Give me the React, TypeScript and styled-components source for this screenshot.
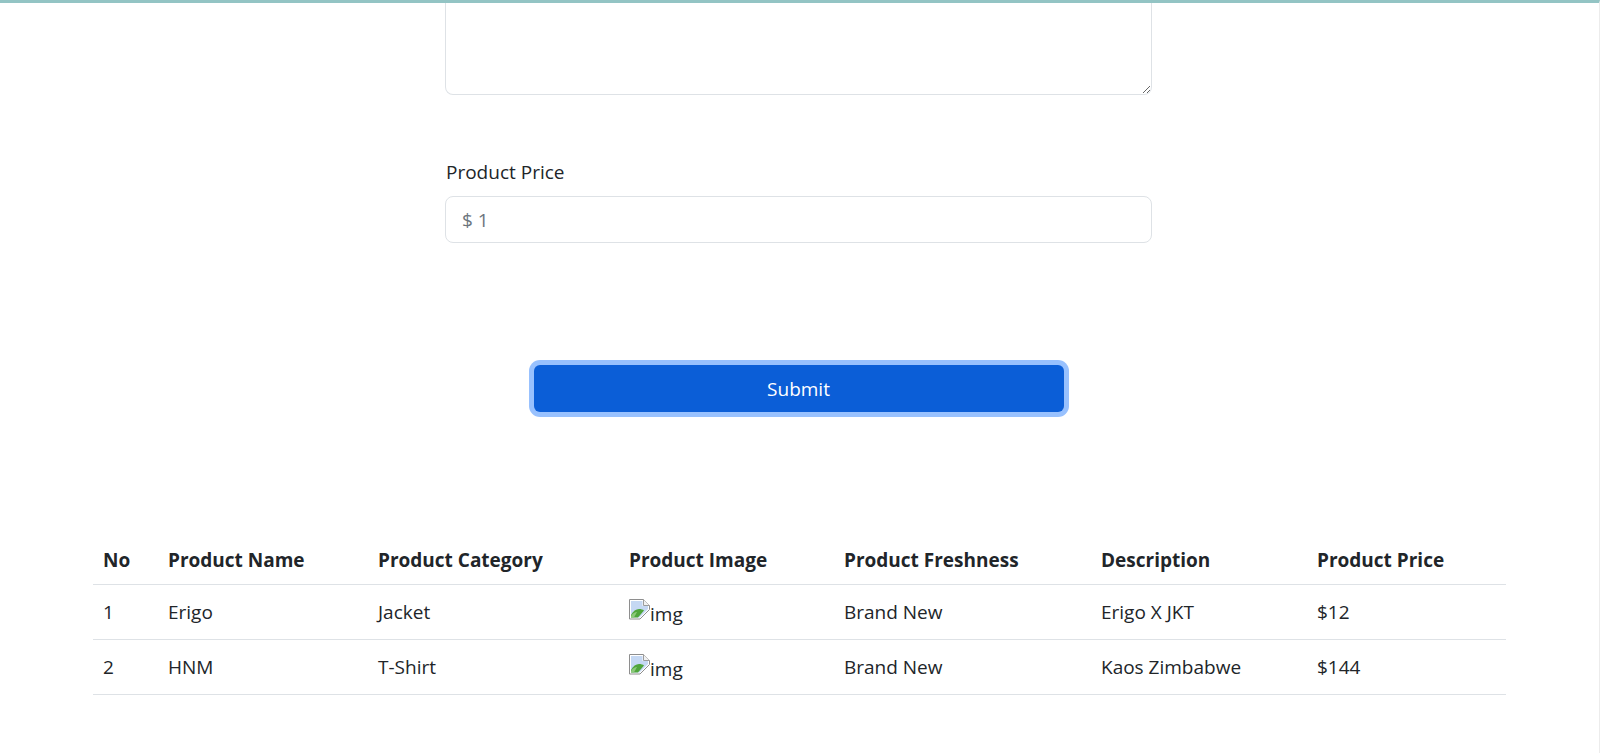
import React from 'react';
import styled, { createGlobalStyle } from 'styled-components';

const GlobalStyle = createGlobalStyle`
  html, body {
    margin: 0;
    height: 100%;
    overflow: hidden;
    background: #fff;
  }

  body {
    font-family: "Open Sans", "Noto Sans", "Liberation Sans", sans-serif;
    font-size: 19px;
    color: #212529;
  }
`;

const Page = styled.div`
  height: 753px;
  box-sizing: border-box;
  border-top: 3px solid #93c4c4;
  border-right: 1px solid #ececec;
`;

const Form = styled.form`
  width: 707px;
  margin-left: 445px;
`;

const TextArea = styled.textarea`
  display: block;
  box-sizing: border-box;
  width: 100%;
  height: 92px;
  padding: 8px 16px;
  background: #fff;
  border: 1px solid #dee2e6;
  border-top: none;
  border-radius: 0 0 8px 8px;
  outline: none;
  font: inherit;
`;

const Field = styled.div`
  margin-top: 65px;
`;

const Label = styled.label`
  display: block;
  height: 25px;
  margin-bottom: 11px;
  padding-left: 1px;
  line-height: 25px;
`;

const Input = styled.input`
  display: block;
  box-sizing: border-box;
  width: 100%;
  height: 47px;
  padding: 1px 16px 0;
  background: #fff;
  border: 1px solid #dee2e6;
  border-radius: 8px;
  outline: none;
  font: inherit;

  &::placeholder {
    color: #6c757d;
    opacity: 1;
  }
`;

const Submit = styled.button`
  display: block;
  width: 530px;
  height: 47px;
  margin: 122px auto 0;
  background: #0b5ed7;
  border: none;
  border-radius: 6px;
  box-shadow: 0 0 0 5px #98c1fe;
  color: #fff;
  font: inherit;
`;

const Table = styled.table`
  width: 1413px;
  margin: 124px 0 0 93px;
  border-collapse: collapse;
  table-layout: fixed;
`;

const Column = styled.col<{ $width: number }>`
  width: ${(p) => p.$width}px;
`;

const Head = styled.th`
  height: 48px;
  padding: 0 10px;
  border-bottom: 1px solid #dee2e6;
  font-weight: 700;
  text-align: left;
  white-space: nowrap;
`;

const Cell = styled.td`
  height: 54px;
  padding: 0 10px;
  border-bottom: 1px solid #dee2e6;
  white-space: nowrap;
`;

const BrokenImage = styled.span`
  display: flex;
  align-items: flex-start;
  padding-top: 5px;
  line-height: 27px;

  svg {
    flex: none;
    margin-top: -2px;
  }
`;

const BrokenIcon = () => (
  <svg width="21" height="21" viewBox="0 0 21 21" aria-hidden="true">
    <path d="M.5.5h14l6 6v4l-9.500 9.500H.5z" fill="#fff" stroke="#8e8e8e" />
    <path d="M2 2h11.500v5H19v3l-8.500 8.500H2z" fill="#c5d8f3" />
    <path d="M2 18.500v-2.500c2-4 5-6 8-6 2 0 4 .5 5 1.500l-6 7z" fill="#4fa63c" />
    <path d="M2 18.500v-1.500c2-3 4-4 6-4l-3 5.500z" fill="#8cc97a" />
    <path d="M14.500 .5v6h6" fill="#f1f1f1" stroke="#9c9c9c" />
  </svg>
);

const columns = [65, 210, 251, 215, 257, 216, 199];
const headers = ['No', 'Product Name', 'Product Category', 'Product Image', 'Product Freshness', 'Description', 'Product Price'];
const products = [
  { no: 1, name: 'Erigo', category: 'Jacket', freshness: 'Brand New', description: 'Erigo X JKT', price: '$12' },
  { no: 2, name: 'HNM', category: 'T-Shirt', freshness: 'Brand New', description: 'Kaos Zimbabwe', price: '$144' },
];

const App: React.FC = () => {
  return (
    <>
      <GlobalStyle />
      <Page>
        <Form onSubmit={(e) => e.preventDefault()}>
          <TextArea />
          <Field>
            <Label htmlFor="price">Product Price</Label>
            <Input id="price" placeholder="$ 1" />
          </Field>
          <Submit type="submit">Submit</Submit>
        </Form>
        <Table>
          <colgroup>
            {columns.map((w, i) => (
              <Column key={i} $width={w} />
            ))}
          </colgroup>
          <thead>
            <tr>
              {headers.map((h) => (
                <Head key={h}>{h}</Head>
              ))}
            </tr>
          </thead>
          <tbody>
            {products.map((p) => (
              <tr key={p.no}>
                <Cell>{p.no}</Cell>
                <Cell>{p.name}</Cell>
                <Cell>{p.category}</Cell>
                <Cell>
                  <BrokenImage>
                    <BrokenIcon />
                    img
                  </BrokenImage>
                </Cell>
                <Cell>{p.freshness}</Cell>
                <Cell>{p.description}</Cell>
                <Cell>{p.price}</Cell>
              </tr>
            ))}
          </tbody>
        </Table>
      </Page>
    </>
  );
};

export default App;
